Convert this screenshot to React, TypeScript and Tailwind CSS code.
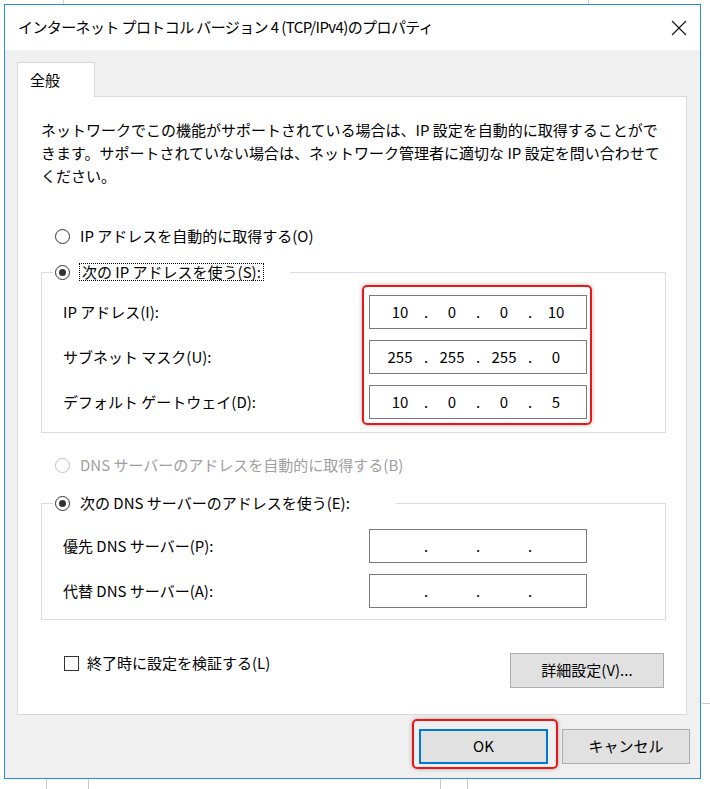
import { Fragment } from 'react';

function Radio({ checked, disabled }: { checked?: boolean; disabled?: boolean }) {
  return (
    <span
      className={`flex h-[15px] w-[15px] shrink-0 items-center justify-center rounded-full border bg-white ${
        disabled ? 'border-[#c4c4c4]' : 'border-[#333333]'
      }`}
    >
      {checked && <span className="h-[7px] w-[7px] rounded-full bg-[#333333]" />}
    </span>
  );
}

function IpBox({ octets }: { octets?: string[] }) {
  return (
    <div className="flex h-[34px] w-[218px] shrink-0 items-center border border-[#7a7a7a] bg-white pl-[10px]">
      {[0, 1, 2, 3].map((i) => (
        <Fragment key={i}>
          {i > 0 && <span className="w-[12px] text-center">.</span>}
          <span className="w-[40px] text-center">{octets?.[i] ?? ''}</span>
        </Fragment>
      ))}
    </div>
  );
}

export default function App() {
  const ipRows = [
    { label: 'IP アドレス(I):', value: ['10', '0', '0', '10'] },
    { label: 'サブネット マスク(U):', value: ['255', '255', '255', '0'] },
    { label: 'デフォルト ゲートウェイ(D):', value: ['10', '0', '0', '5'] },
  ];

  const dnsRows = ['優先 DNS サーバー(P):', '代替 DNS サーバー(A):'];

  return (
    <div className="relative h-[789px] w-[710px] overflow-hidden bg-white font-['Noto_Sans_CJK_JP',sans-serif] text-[15px] text-black">
      {/* window behind the dialog */}
      <div className="absolute left-[63px] top-0 h-[4px] w-px bg-[#d0d0d0]" />
      <div className="absolute left-[588px] top-0 h-[4px] w-px bg-[#d0d0d0]" />
      <div className="absolute left-[46px] top-[779px] h-[10px] w-px bg-[#c8c8c8]" />
      <div className="absolute left-[88px] top-[779px] h-[10px] w-px bg-[#c8c8c8]" />
      <div className="absolute left-[440px] top-[779px] h-[10px] w-px bg-[#c8c8c8]" />
      <div className="absolute left-[467px] top-[779px] h-[10px] w-px bg-[#c8c8c8]" />
      <div className="absolute left-[702px] top-[703px] h-px w-[8px] bg-[#c8c8c8]" />

      <div className="relative ml-[4px] mt-[4px] flex h-[775px] w-[697px] flex-col border border-[#2a8ae0] bg-[#f0f0f0]">
        {/* title bar */}
        <div className="flex h-[45px] items-center justify-between bg-white pl-[13px] pr-[13px]">
          <span className="whitespace-nowrap tracking-[-0.6px]">
            インターネット プロトコル バージョン 4 (TCP/IPv4)のプロパティ
          </span>
          <svg width="16" height="16" viewBox="0 0 16 16">
            <path d="M1 1 L15 15 M15 1 L1 15" stroke="#111" strokeWidth="1.1" fill="none" />
          </svg>
        </div>

        <div className="flex flex-1 flex-col pl-[12px] pt-[12px]">
          {/* tab */}
          <div className="relative z-10 flex h-[35px] w-[78px] items-center border border-b-0 border-[#d9d9d9] bg-white pl-[12px]">
            全般
          </div>

          {/* panel */}
          <div className="-mt-px flex h-[619px] w-[670px] flex-col border border-[#d9d9d9] bg-white">
            <p className="ml-[23px] mt-[21px] whitespace-nowrap leading-[23px]">
              ネットワークでこの機能がサポートされている場合は、IP 設定を自動的に取得することがで
              <br />
              きます。サポートされていない場合は、ネットワーク管理者に適切な IP 設定を問い合わせて
              <br />
              ください。
            </p>

            <div className="ml-[37px] mt-[37px] flex h-[24px] items-center">
              <Radio />
              <span className="ml-[10px] whitespace-nowrap">IP アドレスを自動的に取得する(O)</span>
            </div>

            <fieldset className="ml-[23px] mt-[12px] w-[625px] border border-[#dcdcdc] pb-[7px]">
              <legend className="ml-[11px] w-[237px]">
                <div className="flex h-[24px] items-center pl-[2px]">
                  <Radio checked />
                  <span className="ml-[9px] whitespace-nowrap border border-dotted border-black px-[2px] leading-[16px]">
                    次の IP アドレスを使う(S):
                  </span>
                </div>
              </legend>
              <div className="mt-[1px] flex pl-[21px]">
                <div className="flex w-[299px] flex-col gap-[11px] pt-[10px]">
                  {ipRows.map((r) => (
                    <div key={r.label} className="flex h-[34px] items-center whitespace-nowrap">
                      {r.label}
                    </div>
                  ))}
                </div>
                <div className="flex flex-col gap-[11px] rounded-[5px] border-2 border-[#ee1515] pb-[4px] pl-[5px] pr-[3px] pt-[8px] shadow-[0_0_4px_rgba(0,0,0,0.3)]">
                  {ipRows.map((r) => (
                    <IpBox key={r.label} octets={r.value} />
                  ))}
                </div>
              </div>
            </fieldset>

            <div className="ml-[37px] mt-[20px] flex h-[24px] items-center text-[#a0a0a0]">
              <Radio disabled />
              <span className="ml-[10px] whitespace-nowrap">DNS サーバーのアドレスを自動的に取得する(B)</span>
            </div>

            <fieldset className="ml-[23px] mt-[14px] w-[625px] border border-[#dcdcdc] pb-[11px]">
              <legend className="ml-[11px] w-[343px]">
                <div className="flex h-[24px] items-center pl-[2px]">
                  <Radio checked />
                  <span className="ml-[10px] whitespace-nowrap">次の DNS サーバーのアドレスを使う(E):</span>
                </div>
              </legend>
              <div className="flex flex-col gap-[11px] pt-[14px]">
                {dnsRows.map((label) => (
                  <div key={label} className="flex h-[34px] items-center pl-[21px]">
                    <span className="w-[306px] whitespace-nowrap">{label}</span>
                    <IpBox />
                  </div>
                ))}
              </div>
            </fieldset>

            <div className="mt-[31px] flex items-start justify-between pl-[46px] pr-[22px]">
              <div className="flex h-[24px] items-center">
                <span className="h-[15px] w-[15px] border border-[#333333] bg-white" />
                <span className="ml-[8px] whitespace-nowrap">終了時に設定を検証する(L)</span>
              </div>
              <button className="mt-[2px] flex h-[35px] w-[154px] items-center justify-center border border-[#adadad] bg-[#e1e1e1]">
                詳細設定(V)...
              </button>
            </div>
          </div>

          {/* footer */}
          <div className="flex justify-end pr-[10px]">
            <div className="mt-[4px] rounded-[5px] border-2 border-[#ee1515] pb-[3px] pl-[5px] pr-[8px] pt-[8px] shadow-[0_0_4px_rgba(0,0,0,0.3)]">
              <button className="flex h-[35px] w-[129px] items-center justify-center border-2 border-[#0078d7] bg-[#e1e1e1]">
                OK
              </button>
            </div>
            <button className="ml-[4px] mt-[14px] flex h-[35px] w-[128px] items-center justify-center border border-[#adadad] bg-[#e1e1e1]">
              キャンセル
            </button>
          </div>
        </div>
      </div>
    </div>
  );
}
